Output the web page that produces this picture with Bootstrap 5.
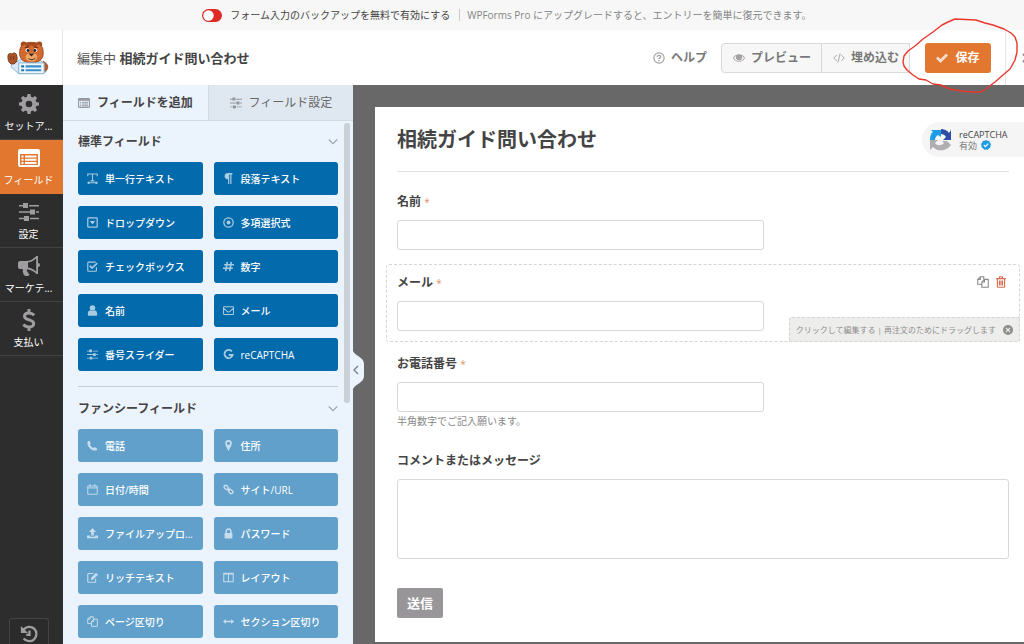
<!DOCTYPE html>
<html lang="ja">
<head>
<meta charset="utf-8">
<meta name="viewport" content="width=device-width, initial-scale=1">
<title>相続ガイド問い合わせ</title>
<link href="https://cdn.jsdelivr.net/npm/bootstrap@5.3.0/dist/css/bootstrap.min.css" rel="stylesheet">
<style>
  body { font-family: "Open Sans", "Noto Sans CJK JP", sans-serif; font-size: 12px; line-height: 18px; color: #444; background: #686868; }
  button { font: inherit; }
  .ico { width: 12px; height: 12px; fill: currentColor; flex: none; }
  .ico-lg { width: 22px; height: 22px; }
  .stroke { fill: none; stroke: currentColor; }

  .notice { height: 30px; background: #f7f7f7; font-size: 10px; gap: 9px; padding-right: 10px; }
  .notice .form-switch { min-height: 0; padding: 0; gap: 8px; }
  .notice .form-check-input { --bs-form-switch-bg: url("data:image/svg+xml,%3csvg xmlns='http://www.w3.org/2000/svg' viewBox='-4 -4 8 8'%3e%3ccircle r='3.2' fill='%23fff'/%3e%3c/svg%3e"); width: 20px; height: 13px; margin: 0; border: 0; background-color: #df2a26; background-image: var(--bs-form-switch-bg); }
  .notice .upsell { color: #858585; border-left: 1px solid #ccc; padding-left: 7px; line-height: 12px; }

  .topbar { height: 55px; background: #fff; flex: none; }
  .brand { width: 63px; border-right: 1px solid #e4e4e4; padding-right: 6px; }
  .form-name { font-size: 13px; padding-left: 14px; color: #555; }
  .form-name strong { color: #444; }
  .tool { font-size: 12px; font-weight: 700; color: #777; background: none; border: 0; gap: 6px; height: 30px; white-space: nowrap; padding: 0; }
  .help { margin-right: 14px; }
  .tools { margin-right: 15px; }
  .tools .tool { background: #f7f7f7; border: 1px solid #d9d9d9; padding: 0 10px 0 11px; }
  .tool .ico { color: #a5a2a5; }
  .save { height: 30px; width: 66px; background: #e27730; color: #fff; font-weight: 700; font-size: 12px; border: 0; border-radius: 3px; gap: 7px; padding: 0; }
  .save .ico { opacity: .75; }
  .ring { left: -22px; top: -24px; width: 115px; height: 74px; pointer-events: none; z-index: 5; overflow: visible; }
  .close-cell { width: 19px; border-left: 1px solid #e4e4e4; margin-left: 14px; overflow: hidden; }

  .work { min-height: 0; }
  .rail { width: 63px; background: #2d2d2d; flex: none; padding-top: 1px; }
  .rail-item { height: 54px; color: #fff; font-size: 10px; line-height: 16px; background: none; border: 0; border-bottom: 1px solid #434343; padding: 1px 6px 0 0; gap: 3px; }
  .rail-item .ico { color: #a09da0; }
  .rail-item.on { background: #e27730; border-color: #e27730; }
  .rail-item.on .ico { color: #fff; }
  .history { height: 26px; margin: 0 14px 0 9px; border: 1px solid #444; border-bottom: 0; border-radius: 3px 3px 0 0; background: #2b2b2b; color: #a09da0; padding: 6px 0 0; }
  .history .ico { width: 18px; height: 18px; }

  .side { width: 290px; background: #ebf3fc; flex: none; }
  .tabs { height: 36px; border-bottom: 1px solid #d3dbe2; }
  .tabs button { border: 0; background: none; gap: 7px; color: #666; padding: 0; }
  .tabs button .ico { color: #95999e; }
  .tabs .on { font-weight: 700; color: #444; }
  .tabs .off { background: #dfe8f0; border-left: 1px solid #d3dbe2; }
  .groups { padding: 12px 15px 0; min-height: 0; overflow: hidden; }
  .group-head { font-size: 12px; line-height: 18px; font-weight: 700; margin: 0 0 11px; }
  .group-head .ico { color: #9aa7b2; width: 10px; height: 10px; }
  .fields { display: grid; grid-template-columns: 1fr 1fr; gap: 11px; }
  .fields button { height: 33px; background: #036aab; color: #fff; border: 0; border-radius: 3px; font-size: 10px; font-weight: 500; padding: 0 9px; gap: 7px; text-align: left; min-width: 0; }
  .fields .ico { width: 11px; height: 11px; opacity: .65; }
  .fields.pro button { background: #60a0cb; }
  .groups hr { margin: 15px 0 13px; color: #b5bcc3; opacity: .7; }
  .thumb { width: 6px; height: 280px; right: 3px; top: 38px; border-radius: 3px; background: #c9d0d6; }
  .fold { width: 12px; height: 38px; right: -12px; top: 266px; border: 0; padding: 0; background: none; color: #7f8a94; z-index: 2; }

  .canvas { padding: 22px 0 0 22px; min-width: 0; overflow: hidden; }
  .sheet { background: #fff; padding: 0 15px 24px 22px; }
  .sheet-head { height: 65px; border-bottom: 1px solid #e0e0e0; margin-bottom: 11px; }
  .sheet-head h1 { font-size: 20px; line-height: 28px; font-weight: 700; margin: 19px 0 0; }
  .captcha { background: #f5f5f5; width: 102px; height: 35px; border-radius: 18px 0 0 18px; margin: 15px -15px 0 0; padding-left: 8px; gap: 7px; font-size: 9px; line-height: 11px; }
  .captcha .state { color: #777; gap: 4px; }
  .field { margin: 0 -11px 3px; border: 1px dashed transparent; padding: 9px 10px 10px; border-radius: 3px; }
  .field.current { border-color: #d5d5d5; }
  .field label { font-weight: 700; line-height: 18px; margin-bottom: 9px; display: block; }
  .req { color: #e0906a; font-weight: 400; font-size: 10px; }
  .field .form-control { border: 1px solid #d8d8d8; border-radius: 3px; font-size: 12px; padding: 4px 8px; height: 30px; width: 60%; min-height: 0; box-shadow: none; }
  .field textarea.form-control { width: 100%; height: 80px; resize: none; }
  .hint { font-size: 10px; line-height: 18px; color: #888; margin-bottom: -2px; }
  .acts { top: 11px; right: 12px; gap: 6px; }
  .acts button { border: 0; background: none; padding: 0; line-height: 0; color: #888; }
  .acts .del { color: #dc6a4b; }
  .tip { right: -1px; bottom: -1px; height: 25px; background: #ededec; border: 1px dashed #d5d5d5; border-radius: 3px 0 3px 0; font-size: 8px; color: #8d8d8d; padding: 0 6px; gap: 7px; }
  .tip .ico { width: 10px; height: 10px; }
  .submit { background: #999699; color: #fff; font-weight: 700; font-size: 13px; height: 30px; width: 46px; border: 0; border-radius: 2px; padding: 0; margin-top: 18px; }
</style>
</head>
<body>
<svg class="d-none" xmlns="http://www.w3.org/2000/svg">
  <symbol id="list" viewBox="0 0 22 18"><path fill-rule="evenodd" d="M2 0h18a2 2 0 0 1 2 2v14a2 2 0 0 1-2 2H2a2 2 0 0 1-2-2V2a2 2 0 0 1 2-2zM2 5v11h18V5zM3.500 6.500h2v2h-2zM7 6.500h11.500v2H7zM3.500 9.700h2v2h-2zM7 9.700h11.500v2H7zM3.500 13h2v2h-2zM7 13h11.500v2H7z"/></symbol>
  <symbol id="sliders" viewBox="0 0 20 18"><path d="M0 2h4V0h5v5H4V3.500H0zM10 2h10v1.500H10zM0 8.200h11V6.500h5v5h-5V9.700H0zM17 8.200h3v1.500h-3zM0 14.700h5V13h5v5H5v-1.800H0zM11 14.700h9v1.500h-9z"/></symbol>
  <symbol id="gear" viewBox="0 0 20 20"><path fill-rule="evenodd" d="M8.500 0h3l.5 2.700 1.700.7L16 1.900 18.100 4l-1.500 2.300.7 1.700 2.700.5v3l-2.700.5-.7 1.700 1.500 2.300L16 18.100l-2.300-1.500-1.700.7-.5 2.700h-3L8 17.300l-1.700-.7L4 18.100 1.900 16l1.500-2.300L2.700 12 0 11.500v-3L2.700 8l.7-1.700L1.900 4 4 1.900l2.300 1.500L8 2.700zM10 6.700a3.300 3.300 0 1 0 0 6.600 3.300 3.300 0 0 0 0-6.600z"/></symbol>
  <symbol id="horn" viewBox="0 0 22 20"><path fill-rule="evenodd" d="M20 0v7a2 2 0 0 1 0 4v7h-1.500c-3-3-6-4.500-9.500-4.800-.8 1.500.5 2 1 3.300.4 1 1.200 1.400 1.600 2-1 2-4.400 1.900-5.600.8-.6-2-1.700-3.500-1.100-6.300H2a2 2 0 0 1-2-2V7a2 2 0 0 1 2-2h6c4 0 7.500-2 10.500-5zm-1.800 2.500C15.500 4.900 13 6 10 6.500v5c3 .4 5.500 1.700 8.200 4z"/></symbol>
  <symbol id="dollar" viewBox="0 0 14 22"><path class="stroke" stroke-width="3" d="M12.200 6.200C10.800 4.800 9.200 4 7 4 4.300 4 2.500 5.300 2.500 7.300c0 4.700 9.200 2.500 9.200 7.200 0 2.100-2 3.500-4.700 3.500-2.300 0-4.200-.9-5.600-2.500M7 0v4M7 18v4"/></symbol>
  <symbol id="undo" viewBox="0 0 20 20"><path class="stroke" stroke-width="2.600" d="M4 5a8 8 0 1 1 0 10M10.500 6v5H7"/><path d="M1 1v8h8z"/></symbol>
  <symbol id="help" viewBox="0 0 14 14"><g class="stroke"><circle cx="7" cy="7" r="6" stroke-width="1.400"/><path stroke-width="1.600" d="M5 5.700C5 4.400 6 4 7 4s2 .6 2 1.600C9 6.800 7 7 7 8.400M7 9.300v1.500"/></g></symbol>
  <symbol id="eye" viewBox="0 0 16 12"><path fill-rule="evenodd" d="M8 1c3.500 0 6.200 1.700 8 5-1.800 3.300-4.500 5-8 5S1.800 9.300 0 6c1.800-3.300 4.500-5 8-5zM4.300 3C3 3.700 2 4.700 1.200 6 2.700 8.600 5 9.900 8 9.900s5.300-1.300 6.800-3.900c-.8-1.300-1.800-2.300-3.100-3a4.200 4.200 0 1 1-7.400 0z"/><circle cx="8" cy="5.200" r="3.400"/></symbol>
  <symbol id="code" viewBox="0 0 16 14"><path class="stroke" stroke-width="1.300" d="M5 3 1 7l4 4M11 3l4 4-4 4M9.500 1l-3 12"/></symbol>
  <symbol id="check" viewBox="0 0 14 12"><path d="M0 6.500 2.200 4.300 5.300 7.300 11.800.8 14 3 5.300 11.700z"/></symbol>
  <symbol id="down" viewBox="0 0 12 12"><path class="stroke" stroke-width="1.500" d="m1 3 5 5 5-5"/></symbol>
  <symbol id="text" viewBox="0 0 14 14"><path class="stroke" stroke-width="1.400" d="M1 4V1.200h12V4M7 1.200V10M4.500 10h5M1 12.500h12M3 11l-2 1.500L3 14M11 11l2 1.500-2 1.500"/></symbol>
  <symbol id="para" viewBox="0 0 12 14"><path d="M11 0v1.800H9.800V14H8.300V1.800H7V14H5.500V8C3 8 1 6.500 1 4s2-4 4.500-4z"/></symbol>
  <symbol id="drop" viewBox="0 0 14 14"><rect class="stroke" stroke-width="1.600" x="1" y="1" width="12" height="12" rx="1"/><path d="M3.500 5h7L7 9.500z"/></symbol>
  <symbol id="radio" viewBox="0 0 14 14"><circle class="stroke" stroke-width="1.600" cx="7" cy="7" r="6"/><circle cx="7" cy="7" r="2.500"/></symbol>
  <symbol id="tick" viewBox="0 0 14 14"><path class="stroke" stroke-width="1.500" d="M12 8v4a1 1 0 0 1-1 1H2a1 1 0 0 1-1-1V2.500a1 1 0 0 1 1-1h9"/><path class="stroke" stroke-width="2.200" d="m3.500 6 3 3L13 2.800"/></symbol>
  <symbol id="hash" viewBox="0 0 14 14"><path class="stroke" stroke-width="2" d="M5.500 1 3.500 13M10.500 1l-2 12M1.500 4.700H14M0 9.300h12.500"/></symbol>
  <symbol id="user" viewBox="0 0 14 14"><circle cx="7" cy="3.700" r="3.500"/><path d="M4 6.800c2 1.300 4 1.300 6 0 2 .3 3 2.200 3 5 0 1.300-.7 2-2 2H3c-1.300 0-2-.7-2-2 0-2.800 1-4.700 3-5z"/></symbol>
  <symbol id="mail" viewBox="0 0 16 14"><path class="stroke" stroke-width="1.500" d="M1.800 1.500h12.400a1 1 0 0 1 1 1v9.300a1 1 0 0 1-1 1H1.800a1 1 0 0 1-1-1V2.500a1 1 0 0 1 1-1zM1 4l5.500 4.500c1 .8 2 .8 3 0L15 4"/></symbol>
  <symbol id="goog" viewBox="0 0 14 14"><path class="stroke" stroke-width="2.300" d="M11.300 3.200A5.200 5.200 0 1 0 12.200 7.600H7.300"/></symbol>
  <symbol id="phone" viewBox="0 0 14 14"><path d="m3 1 2 3.500-1.300 1.300c.8 2 2.500 3.700 4.500 4.500L9.500 9 13 11c0 1.500-1 2.500-3 2.500C5.500 13.300.7 8.500.5 4 .5 2 1.500 1 3 1z"/></symbol>
  <symbol id="pin" viewBox="0 0 10 14"><path fill-rule="evenodd" d="M5 0a4.200 4.200 0 0 1 4.200 4.300C9.200 6.500 6.500 11 5 14 3.500 11 .8 6.500.8 4.300A4.200 4.200 0 0 1 5 0zm0 2.200a2 2 0 1 0 0 4.100 2 2 0 0 0 0-4.100z"/></symbol>
  <symbol id="cal" viewBox="0 0 14 14"><path class="stroke" stroke-width="1.200" d="M1 2.500h12V13H1zM1 5h12M4 0v3.500M10 0v3.500"/></symbol>
  <symbol id="link" viewBox="0 0 14 14"><g class="stroke" stroke-width="1.800"><rect x="1" y="2.500" width="6.500" height="4" rx="2" transform="rotate(45 4.200 4.500)"/><rect x="6.500" y="7.500" width="6.500" height="4" rx="2" transform="rotate(45 9.700 9.500)"/><path d="m5.500 5.500 3 3"/></g></symbol>
  <symbol id="up" viewBox="0 0 14 14"><path d="m7 0 4.500 5H8.700v4.500H5.300V5H2.500zM0 9.500h4V11h6V9.500h4V13H0z"/></symbol>
  <symbol id="lock" viewBox="0 0 12 14"><path class="stroke" stroke-width="1.900" d="M3 7V4.300a3 3 0 0 1 6 0V7"/><rect x="1" y="6.300" width="10" height="7" rx="1"/></symbol>
  <symbol id="edit" viewBox="0 0 14 14"><path class="stroke" stroke-width="1.400" d="M11 8.500V12a1 1 0 0 1-1 1H2a1 1 0 0 1-1-1V3a1 1 0 0 1 1-1h6"/><path d="M11.500 1 14 3.500 7.500 10H5V7.500z"/></symbol>
  <symbol id="cols" viewBox="0 0 14 14"><path class="stroke" stroke-width="1.300" d="M1 1.500h12v11H1zM7 1.500v11M1 2.500h12"/></symbol>
  <symbol id="copy" viewBox="0 0 16 16"><path fill="none" stroke="currentColor" stroke-width="1.400" d="M6.500 11H1V4.500L4.500 1H9v3.500M4.500 1v3.500H1M6.500 8 10 4.500h5V15H6.500zM10 4.500V8H6.500"/></symbol>
  <symbol id="arrows" viewBox="0 0 16 14"><path d="M0 7l4-3.500V6h8V3.500L16 7l-4 3.500V8H4v2.500z"/></symbol>
  <symbol id="trash" viewBox="0 0 14 16"><path class="stroke" stroke-width="1.500" d="M.5 3.500h13M4.500 3.500 5.300 1h3.400l.8 2.500M2.200 3.500V14a1 1 0 0 0 1 1h7.600a1 1 0 0 0 1-1V3.500M5 6v6.500M7 6v6.500M9 6v6.500"/></symbol>
  <symbol id="cross" viewBox="0 0 14 14"><path fill-rule="evenodd" d="M7 0a7 7 0 1 1 0 14A7 7 0 0 1 7 0zM4.800 3.600 3.600 4.800 5.800 7 3.600 9.200l1.200 1.200L7 8.200l2.200 2.200 1.200-1.200L8.200 7l2.200-2.200-1.200-1.200L7 5.800z"/></symbol>
</svg>

<div class="d-flex flex-column vh-100 overflow-hidden">
  <div class="notice d-flex align-items-center justify-content-center text-nowrap flex-shrink-0">
    <div class="form-check form-switch d-flex align-items-center mb-0">
      <input class="form-check-input float-none" type="checkbox" role="switch" id="backup">
      <label for="backup">フォーム入力のバックアップを無料で有効にする</label>
    </div>
    <span class="upsell">WPForms Pro にアップグレードすると、エントリーを簡単に復元できます。</span>
  </div>

  <header class="topbar d-flex align-items-stretch">
    <div class="brand d-flex align-items-center justify-content-center flex-shrink-0">
      <svg width="43" height="36" viewBox="0 0 44 36" role="img" aria-label="WPForms">
        <path d="M10 22c4-3 8-4 13-4s11 1 14 5l3 9-4 2H12l-8-7 2-5z" fill="#d8e9f5" stroke="#8db9d8"/>
        <path d="M38 22c4 2 5 6 2 9l-3 1V21z" fill="#b85a2b" stroke="#7c3a1c" stroke-width=".7"/>
        <path d="M1 16c0-3 3-3 4-2 2-2 5-1 5 2 1 3 0 7-3 8H4c-3-2-3-5-3-8z" fill="#ad5428" stroke="#743619"/>
        <path d="M4 16v4M7 16v4" stroke="#743619"/>
        <circle cx="17" cy="4" r="3" fill="#a64a20"/><circle cx="33" cy="4" r="3" fill="#a64a20"/>
        <path d="M13 11c0-6 5-9 12-9s12 3 12 9c1 7-3 12-12 12S12 18 13 11z" fill="#d2692f" stroke="#8b431f" stroke-width=".8"/>
        <path d="M18 4c4-3 10-3 14 0l-3 3-4-2-4 2z" fill="#a64a20"/>
        <ellipse cx="25" cy="17" rx="6" ry="4.500" fill="#eda767"/>
        <circle cx="21" cy="10" r="2" fill="#fff"/><circle cx="29" cy="10" r="2" fill="#fff"/>
        <circle cx="21.500" cy="10.300" r="1.500" fill="#222"/><circle cx="28.500" cy="10.300" r="1.500" fill="#222"/>
        <path d="M18.500 7.500l4-1M27.500 6.500l4 1" stroke="#5a2913" stroke-width="1.200"/>
        <path d="M22 13.500h6l-3 3z" fill="#43210f"/><path d="M22 18.500c2 2 5 1.500 7-.5" fill="none" stroke="#43210f"/>
        <path d="M12 23h26v11H12z" fill="#eff7fc" stroke="#82b2d5"/>
        <path d="M14.500 26.500h3M14.500 30.500h3" stroke="#2871a8" stroke-width="2.200"/><path d="M19 26.500h16M19 30.500h16" stroke="#3b8fca" stroke-width="2.200"/>
      </svg>
    </div>
    <div class="form-name d-flex align-items-center flex-grow-1 text-nowrap"><span>編集中 <strong>相続ガイド問い合わせ</strong></span></div>
    <div class="d-flex align-items-center">
      <button class="tool help d-flex align-items-center" type="button"><svg class="ico"><use href="#help"/></svg>ヘルプ</button>
      <div class="btn-group tools">
        <button class="tool d-flex align-items-center rounded-start-1" type="button"><svg class="ico"><use href="#eye"/></svg>プレビュー</button>
        <button class="tool d-flex align-items-center border-start-0" type="button"><svg class="ico"><use href="#code"/></svg>埋め込む</button>
      </div>
      <div class="position-relative">
        <button class="save d-flex align-items-center justify-content-center" type="button"><svg class="ico"><use href="#check"/></svg>保存</button>
        <svg class="ring position-absolute" viewBox="0 0 115 74" fill="none" stroke="#e8382d" stroke-width="1.400" stroke-linejoin="round"><path d="M73 1 52 0 45 3 39 6 30 13 20 20 12 27 5 32 1 37 0 43 1 47 4 51 10 56 16 60 23 61 30 65 38 66 47 70 58 72 70 73 78 73 84 69 92 63 100 56 107 50 112 41 114 33 114 24 112 18 108 14 101 10 90 6 82 4z"/></svg>
      </div>
    </div>
    <button class="close-cell bg-white border-top-0 border-end-0 border-bottom-0 p-0 d-flex align-items-center flex-shrink-0" type="button" aria-label="閉じる"><svg class="ms-3 flex-shrink-0" width="10" height="10" viewBox="0 0 10 10" stroke="#8b888b" stroke-width="2"><path d="m1 1 8 8M9 1 1 9"/></svg></button>
  </header>

  <div class="work d-flex flex-grow-1">
    <nav class="rail d-flex flex-column" aria-label="ビルダー">
      <button class="rail-item d-flex flex-column align-items-center justify-content-center" type="button"><svg class="ico ico-lg"><use href="#gear" x="1" y="1" width="20" height="20"/></svg>セットア...</button>
      <button class="rail-item on d-flex flex-column align-items-center justify-content-center" type="button"><svg class="ico ico-lg"><use href="#list"/></svg>フィールド</button>
      <button class="rail-item d-flex flex-column align-items-center justify-content-center" type="button"><svg class="ico ico-lg"><use href="#sliders" x="1" y="2" width="20" height="18"/></svg>設定</button>
      <button class="rail-item d-flex flex-column align-items-center justify-content-center" type="button"><svg class="ico ico-lg"><use href="#horn"/></svg>マーケテ...</button>
      <button class="rail-item d-flex flex-column align-items-center justify-content-center" type="button"><svg class="ico ico-lg"><use href="#dollar"/></svg>支払い</button>
      <button class="history mt-auto d-flex justify-content-center" type="button" aria-label="履歴"><svg class="ico"><use href="#undo"/></svg></button>
    </nav>

    <aside class="side position-relative d-flex flex-column">
      <div class="tabs d-flex flex-shrink-0">
        <button class="on w-50 d-flex align-items-center justify-content-center" type="button"><svg class="ico"><use href="#list"/></svg>フィールドを追加</button>
        <button class="off w-50 d-flex align-items-center justify-content-center" type="button"><svg class="ico"><use href="#sliders"/></svg>フィールド設定</button>
      </div>
      <div class="groups flex-grow-1">
        <h2 class="group-head d-flex align-items-center justify-content-between">標準フィールド<svg class="ico"><use href="#down"/></svg></h2>
        <div class="fields">
          <button class="d-flex align-items-center" type="button"><svg class="ico"><use href="#text"/></svg>単一行テキスト</button>
          <button class="d-flex align-items-center" type="button"><svg class="ico"><use href="#para"/></svg>段落テキスト</button>
          <button class="d-flex align-items-center" type="button"><svg class="ico"><use href="#drop"/></svg>ドロップダウン</button>
          <button class="d-flex align-items-center" type="button"><svg class="ico"><use href="#radio"/></svg>多項選択式</button>
          <button class="d-flex align-items-center" type="button"><svg class="ico"><use href="#tick"/></svg>チェックボックス</button>
          <button class="d-flex align-items-center" type="button"><svg class="ico"><use href="#hash"/></svg>数字</button>
          <button class="d-flex align-items-center" type="button"><svg class="ico"><use href="#user"/></svg>名前</button>
          <button class="d-flex align-items-center" type="button"><svg class="ico"><use href="#mail"/></svg>メール</button>
          <button class="d-flex align-items-center" type="button"><svg class="ico"><use href="#sliders"/></svg>番号スライダー</button>
          <button class="d-flex align-items-center" type="button"><svg class="ico"><use href="#goog"/></svg>reCAPTCHA</button>
        </div>
        <hr>
        <h2 class="group-head d-flex align-items-center justify-content-between">ファンシーフィールド<svg class="ico"><use href="#down"/></svg></h2>
        <div class="fields pro">
          <button class="d-flex align-items-center" type="button"><svg class="ico"><use href="#phone"/></svg>電話</button>
          <button class="d-flex align-items-center" type="button"><svg class="ico"><use href="#pin"/></svg>住所</button>
          <button class="d-flex align-items-center" type="button"><svg class="ico"><use href="#cal"/></svg>日付/時間</button>
          <button class="d-flex align-items-center" type="button"><svg class="ico"><use href="#link"/></svg>サイト/URL</button>
          <button class="d-flex align-items-center" type="button"><svg class="ico"><use href="#up"/></svg>ファイルアップロ...</button>
          <button class="d-flex align-items-center" type="button"><svg class="ico"><use href="#lock"/></svg>パスワード</button>
          <button class="d-flex align-items-center" type="button"><svg class="ico"><use href="#edit"/></svg>リッチテキスト</button>
          <button class="d-flex align-items-center" type="button"><svg class="ico"><use href="#cols"/></svg>レイアウト</button>
          <button class="d-flex align-items-center" type="button"><svg class="ico"><use href="#copy"/></svg>ページ区切り</button>
          <button class="d-flex align-items-center" type="button"><svg class="ico"><use href="#arrows"/></svg>セクション区切り</button>
        </div>
      </div>
      <div class="thumb position-absolute"></div>
      <button class="fold position-absolute" type="button" aria-label="折りたたむ"><svg class="d-block" width="12" height="38" viewBox="0 0 12 38"><path fill="#ebf3fc" d="M0 0c2 5 11 6 11 13v12c0 7-9 8-11 13z"/><path class="stroke" stroke-width="1.500" d="m5 15-4 4 4 4"/></svg></button>
    </aside>

    <main class="canvas flex-grow-1">
      <form class="sheet">
        <div class="sheet-head d-flex justify-content-between align-items-start">
          <h1>相続ガイド問い合わせ</h1>
          <div class="captcha d-flex align-items-center">
            <svg width="22" height="22" viewBox="0 0 22 22"><path fill="#1c9be6" d="M0 11C0 7 1 4 3 3L1 1h10v7L8 6c-2 1-3 3-3 5z"/><path fill="#2c4fa6" d="M11 0c3 0 6 1 8 4l2-3v10h-8l3-3c-1-2-3-3-5-3z"/><path fill="#b0aeb1" d="M0 11h8l-3 3c2 3 6 3 9 0l-2-2h5l4 4c-3 5-13 8-18 2l-3 3z"/></svg>
            <div><div>reCAPTCHA</div><div class="state d-flex align-items-center">有効<svg width="10" height="10" viewBox="0 0 10 10"><path fill="#1c9be6" d="m5 0 1.500.8L8.300 1l.4 1.500L10 4l-.5 1.500v1.700L8 8.300l-1.300 1.400L5 9.500l-1.700.2L2 8.300.5 7.200V5.500L0 4l1.300-1.500L1.700 1l1.800-.2z"/><path fill="none" stroke="#fff" stroke-width="1.200" d="m2.800 5 1.600 1.600 2.900-3"/></svg></div></div>
          </div>
        </div>
        <div class="field">
          <label for="f-name">名前 <span class="req">*</span></label>
          <input class="form-control" type="text" id="f-name">
        </div>
        <div class="field current position-relative">
          <label for="f-mail">メール <span class="req">*</span></label>
          <input class="form-control" type="email" id="f-mail">
          <div class="acts position-absolute d-flex">
            <button type="button" aria-label="複製"><svg class="ico"><use href="#copy"/></svg></button>
            <button class="del" type="button" aria-label="削除"><svg class="ico"><use href="#trash"/></svg></button>
          </div>
          <div class="tip position-absolute d-flex align-items-center">クリックして編集する | 再注文のためにドラッグします<svg class="ico"><use href="#cross"/></svg></div>
        </div>
        <div class="field">
          <label for="f-tel">お電話番号 <span class="req">*</span></label>
          <input class="form-control" type="tel" id="f-tel">
          <div class="hint">半角数字でご記入願います。</div>
        </div>
        <div class="field">
          <label for="f-msg">コメントまたはメッセージ</label>
          <textarea class="form-control" id="f-msg"></textarea>
        </div>
        <button class="submit d-block" type="button">送信</button>
      </form>
    </main>
  </div>
</div>
<script src="https://cdn.jsdelivr.net/npm/bootstrap@5.3.0/dist/js/bootstrap.bundle.min.js"></script>
</body>
</html>
